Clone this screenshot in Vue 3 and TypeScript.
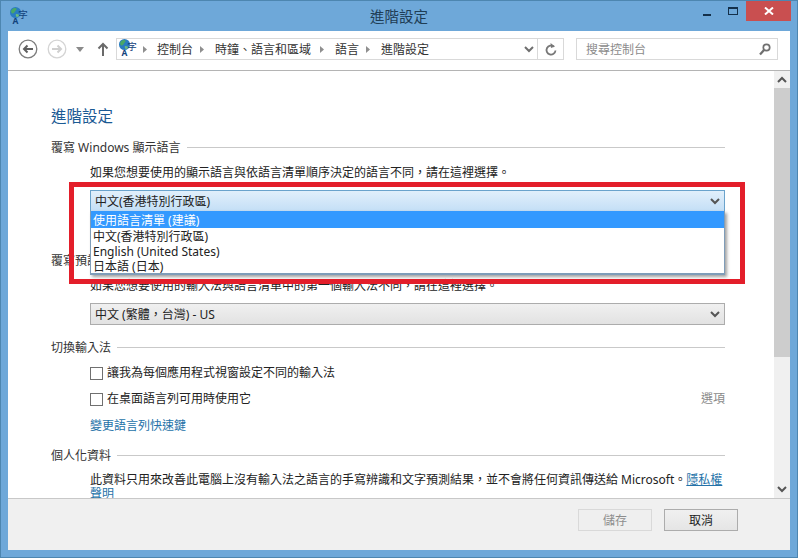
<script setup lang="ts">
const crumbs: string[] = ['控制台', '時鐘、語言和區域', '語言', '進階設定']
const options: string[] = ['使用語言清單 (建議)', '中文(香港特別行政區)', 'English (United States)', '日本語 (日本)']
</script>

<template>
  <div class="window">
    <header class="titlebar">
      <svg class="app-icon" width="20" height="20" viewBox="0 0 20 20">
        <circle cx="5.500" cy="5.500" r="5.500" fill="#2a7cc0" />
        <path d="M1.500 3C3 .5 6 .5 6.500 1.500s-1 2-1.500 3S3.500 6.500 2.500 6.500.5 4.500 1.500 3z" fill="#49a866" />
        <path d="M6 7c1 0 2.500 0 3 1s-1 2-2 2-1.500-2-1-3z" fill="#6cbb7c" />
        <text x="8.300" y="10.500" class="glyph-zi">字</text>
        <text x="2.500" y="16.500" class="glyph-a">A</text>
      </svg>
      <h1 class="title">進階設定</h1>
      <div class="controls">
        <span class="ctl"><i class="min"></i></span>
        <span class="ctl"><i class="max"></i></span>
        <span class="close">
          <svg width="10" height="8" viewBox="0 0 10 8"><path d="M1 .5l8 7M9 .5l-8 7" stroke="#fff" stroke-width="2" fill="none" /></svg>
        </span>
      </div>
    </header>

    <div class="body">
      <nav class="toolbar">
        <div class="navs">
          <svg class="nav" width="20" height="20" viewBox="0 0 20 20">
            <circle cx="10" cy="10" r="8.800" fill="#fff" stroke="#7d7d7d" stroke-width="1.300" />
            <path d="M15 10H6M9.500 6.500L6 10l3.500 3.500" stroke="#5f5f5f" stroke-width="2" fill="none" />
          </svg>
          <svg class="nav" width="20" height="20" viewBox="0 0 20 20">
            <circle cx="10" cy="10" r="8.800" fill="#fff" stroke="#d4d4d4" stroke-width="1.300" />
            <path d="M5 10h9M10.500 6.500L14 10l-3.500 3.500" stroke="#cfcfcf" stroke-width="2" fill="none" />
          </svg>
          <svg class="caret" width="8" height="5" viewBox="0 0 8 5"><path d="M0 0h8L4 5z" fill="#8a8a8a" /></svg>
          <svg class="up" width="12" height="14" viewBox="0 0 12 14">
            <path d="M6 14V2M1.500 6.500L6 2l4.500 4.500" stroke="#6a6a6a" stroke-width="2" fill="none" />
          </svg>
        </div>
        <div class="address">
          <svg class="addr-icon" width="20" height="20" viewBox="0 0 20 20">
            <circle cx="5.500" cy="5.500" r="5.500" fill="#2a7cc0" />
            <path d="M1.500 3C3 .5 6 .5 6.500 1.500s-1 2-1.500 3S3.500 6.500 2.500 6.500.5 4.500 1.500 3z" fill="#49a866" />
            <path d="M6 7c1 0 2.500 0 3 1s-1 2-2 2-1.500-2-1-3z" fill="#6cbb7c" />
            <text x="8.300" y="10.500" class="glyph-zi">字</text>
            <text x="2.500" y="16.500" class="glyph-a">A</text>
          </svg>
          <div class="crumbs">
            <template v-for="c in crumbs" :key="c">
              <svg class="sep" width="4" height="7" viewBox="0 0 4 7"><path d="M0 0l4 3.500L0 7z" fill="#8f8f8f" /></svg>
              <span class="crumb">{{ c }}</span>
            </template>
          </div>
          <svg class="addr-chev" width="10" height="7" viewBox="0 0 10 7"><path d="M1 1l4 4 4-4" stroke="#6f6f6f" stroke-width="2" fill="none" /></svg>
          <span class="refresh">
            <svg width="12" height="13" viewBox="0 0 12 13">
              <path d="M8.800 3.500A4.500 4.500 0 1 0 10.500 7.500" stroke="#777" stroke-width="1.800" fill="none" />
              <path d="M5.500 0l4.500 3.500L6 5z" fill="#777" />
            </svg>
          </span>
        </div>
        <div class="search">
          <span>搜尋控制台</span>
          <svg width="12" height="13" viewBox="0 0 12 13">
            <circle cx="7.500" cy="4.500" r="3.200" fill="none" stroke="#6f6f6f" stroke-width="1.700" />
            <path d="M5 7l-4 4.500" stroke="#6f6f6f" stroke-width="2.200" />
          </svg>
        </div>
      </nav>

      <div class="middle">
        <main class="content">
          <h2 class="page-title">進階設定</h2>

          <div class="section-head first"><span>覆寫 Windows 顯示語言</span></div>
          <p class="desc">如果您想要使用的顯示語言與依語言清單順序決定的語言不同，請在這裡選擇。</p>
          <div class="select open">
            <span>中文(香港特別行政區)</span>
            <svg width="10" height="7" viewBox="0 0 10 7"><path d="M1 1l4 4 4-4" stroke="#555" stroke-width="2" fill="none" /></svg>
            <ul class="menu">
              <li v-for="(o, i) in options" :key="o" :class="{ active: i === 0 }">{{ o }}</li>
            </ul>
          </div>

          <div class="section-head second"><span>覆寫預設輸入法</span></div>
          <p class="desc">如果您想要使用的輸入法與語言清單中的第一個輸入法不同，請在這裡選擇。</p>
          <div class="select">
            <span>中文 (繁體，台灣) - US</span>
            <svg width="10" height="7" viewBox="0 0 10 7"><path d="M1 1l4 4 4-4" stroke="#555" stroke-width="2" fill="none" /></svg>
          </div>

          <div class="section-head third"><span>切換輸入法</span></div>
          <label class="check first-check"><i class="box"></i>讓我為每個應用程式視窗設定不同的輸入法</label>
          <div class="check-row">
            <label class="check"><i class="box"></i>在桌面語言列可用時使用它</label>
            <span class="options">選項</span>
          </div>
          <a class="link hotkey">變更語言列快速鍵</a>

          <div class="section-head fourth"><span>個人化資料</span></div>
          <p class="para">此資料只用來改善此電腦上沒有輸入法之語言的手寫辨識和文字預測結果，並不會將任何資訊傳送給 Microsoft。<a class="link under">隱私權<br />聲明</a></p>
        </main>
        <aside class="scrollbar">
          <span class="arrow"><svg width="10" height="7" viewBox="0 0 10 7"><path d="M1 6l4-4 4 4" stroke="#555" stroke-width="2" fill="none" /></svg></span>
          <div class="track"><div class="thumb"></div></div>
          <span class="arrow"><svg width="10" height="7" viewBox="0 0 10 7"><path d="M1 1l4 4 4-4" stroke="#555" stroke-width="2" fill="none" /></svg></span>
        </aside>
      </div>

      <footer class="footer">
        <button class="btn" disabled>儲存</button>
        <button class="btn">取消</button>
      </footer>
    </div>

    <div class="annotation"></div>
  </div>
</template>

<style scoped>
.window {
  position: relative;
  box-sizing: border-box;
  width: 798px;
  height: 558px;
  display: flex;
  flex-direction: column;
  padding: 0 7px 7px;
  background: #6ea8d9;
  border: 1px solid #4d86b0;
  font-family: "Noto Sans", "Noto Sans CJK TC", sans-serif;
  font-size: 12px;
  color: #222;
  overflow: hidden;
}
.titlebar {
  position: relative;
  flex: 0 0 30px;
  box-sizing: border-box;
  padding-bottom: 2px;
  display: flex;
  align-items: center;
  justify-content: center;
}
.app-icon {
  position: absolute;
  left: 2px;
  top: 6px;
}
.glyph-zi {
  font-size: 9.500px;
  fill: #12437c;
  font-family: "Noto Sans CJK TC", sans-serif;
}
.glyph-a {
  font-size: 8.500px;
  font-weight: 700;
  fill: #12437c;
  font-family: "Noto Sans", sans-serif;
}
.title {
  margin: 0;
  font-size: 14.500px;
  font-weight: 400;
  color: #1f3d55;
}
.controls {
  position: absolute;
  right: -1px;
  top: 0;
  display: flex;
  align-items: flex-start;
}
.ctl {
  width: 22px;
  height: 20px;
  display: flex;
  align-items: center;
  justify-content: center;
}
.ctl:first-child {
  margin-right: 4px;
}
.min {
  display: block;
  width: 8px;
  height: 2px;
  margin-top: 7px;
  background: #14304a;
}
.max {
  display: block;
  box-sizing: border-box;
  width: 10px;
  height: 8px;
  margin-top: -1px;
  border: 1px solid #14304a;
  border-top-width: 2px;
}
.close {
  width: 45px;
  height: 20px;
  margin-left: 2px;
  background: #c94f50;
  display: flex;
  align-items: center;
  justify-content: center;
}
.body {
  flex: 1;
  min-height: 0;
  display: flex;
  flex-direction: column;
  background: #fff;
}
.toolbar {
  flex: 0 0 40px;
  box-sizing: border-box;
  display: flex;
  align-items: flex-start;
  padding-top: 7px;
  border-bottom: 1px solid #b4b4b4;
}
.navs {
  width: 108px;
  height: 22px;
  flex: none;
  display: flex;
  align-items: center;
}
.nav {
  margin-left: 10px;
}
.nav + .nav {
  margin-left: 9px;
}
.caret {
  margin-left: 9px;
}
.up {
  margin-left: 13px;
}
.address {
  box-sizing: border-box;
  width: 448px;
  height: 22px;
  flex: none;
  display: flex;
  align-items: center;
  border: 1px solid #d9d9d9;
}
.addr-icon {
  margin-left: 2px;
  flex: none;
}
.crumbs {
  flex: 1;
  display: flex;
  align-items: center;
}
.sep {
  margin-left: 7px;
  margin-right: 11px;
  flex: none;
}
.sep:first-child {
  margin-left: 4px;
  margin-right: 10px;
}
.sep:nth-child(5) {
  margin-left: 9px;
}
.crumb {
  color: #333;
}
.addr-chev {
  margin-right: 3px;
  flex: none;
}
.refresh {
  width: 25px;
  height: 20px;
  border-left: 1px solid #d9d9d9;
  display: flex;
  align-items: center;
  justify-content: center;
  flex: none;
}
.search {
  box-sizing: border-box;
  width: 202px;
  height: 22px;
  margin-left: 12px;
  flex: none;
  display: flex;
  align-items: center;
  justify-content: space-between;
  padding: 0 6px 0 9px;
  border: 1px solid #d9d9d9;
  color: #8c8c8c;
}
.middle {
  flex: 1;
  min-height: 0;
  display: flex;
}
.content {
  flex: 1;
  min-width: 0;
  overflow: hidden;
  padding: 35px 49px 0 43px;
}
.page-title {
  margin: 0;
  height: 20px;
  line-height: 20px;
  font-size: 15.500px;
  font-weight: 400;
  color: #1b5a94;
}
.section-head {
  display: flex;
  align-items: center;
  gap: 6px;
  height: 16px;
  line-height: 16px;
  color: #333;
}
.section-head span {
  padding-top: 2px;
}
.section-head::after {
  content: "";
  flex: 1;
  height: 1px;
  background: #c9c9c9;
}
.section-head.first {
  margin-top: 13px;
}
.section-head.second {
  margin-top: 40px;
}
.section-head.third {
  margin-top: 14px;
}
.section-head.fourth {
  margin-top: 13px;
}
.desc {
  margin: 10px 0 9px 39px;
  height: 16px;
  line-height: 16px;
  white-space: nowrap;
}
.select {
  position: relative;
  box-sizing: border-box;
  margin-left: 39px;
  height: 22px;
  display: flex;
  align-items: center;
  justify-content: space-between;
  padding: 0 4px 0 4px;
  border: 1px solid #acacac;
  background: linear-gradient(#f0f0f0, #e2e2e2);
}
.select.open {
  border-color: #6aa3cc;
  background: linear-gradient(#e1effb, #c4dff6);
}
.menu {
  position: absolute;
  z-index: 2;
  left: -1px;
  right: -1px;
  top: 20px;
  margin: 0;
  padding: 0;
  list-style: none;
  background: #fff;
  border: 1px solid #7f9db9;
  border-top: 0;
  border-bottom-width: 2px;
  box-shadow: 2px 2px 3px rgba(70, 70, 70, 0.5);
}
.menu li {
  box-sizing: border-box;
  height: 15px;
  line-height: 15px;
  padding: 1px 0 0 2px;
  color: #222;
}
.menu li.active {
  height: 17px;
  padding-top: 2px;
  background: #3399ff;
  color: #fff;
}
.check {
  display: flex;
  align-items: center;
  gap: 4px;
  height: 16px;
  line-height: 16px;
}
.first-check {
  margin: 10px 0 1px 39px;
}
.box {
  display: block;
  box-sizing: border-box;
  width: 13px;
  height: 13px;
  border: 1px solid #707070;
  background: #fff;
}
.check-row {
  height: 16px;
  line-height: 16px;
  margin: 10px 0 0 39px;
  display: flex;
  align-items: center;
  justify-content: space-between;
}
.options {
  color: #8a8a8a;
}
.link {
  color: #2572a8;
}
.hotkey {
  display: block;
  margin: 11px 0 0 39px;
  height: 16px;
  line-height: 16px;
}
.under {
  text-decoration: underline;
}
.para {
  margin: 10px 0 0 39px;
  line-height: 14px;
  white-space: nowrap;
}
.scrollbar {
  flex: 0 0 16px;
  display: flex;
  flex-direction: column;
  background: #f0f0f0;
}
.arrow {
  flex: 0 0 17px;
  display: flex;
  align-items: center;
  justify-content: center;
}
.track {
  flex: 1;
}
.thumb {
  height: 269px;
  background: #cdcdcd;
}
.footer {
  flex: 0 0 52px;
  box-sizing: border-box;
  display: flex;
  justify-content: flex-end;
  gap: 12px;
  padding: 10px 52px 0 0;
  background: #f0f0f0;
  border-top: 1px solid #c8c8c8;
}
.btn {
  box-sizing: border-box;
  width: 74px;
  height: 22px;
  padding: 0;
  font: inherit;
  color: #222;
  border: 1px solid #acacac;
  background: linear-gradient(#f0f0f0, #e5e5e5);
}
.btn:disabled {
  color: #8d8d8d;
  border-color: #d9d9d9;
  background: #efefef;
}
.annotation {
  position: absolute;
  z-index: 3;
  left: 68px;
  top: 181px;
  box-sizing: border-box;
  width: 676px;
  height: 102px;
  border: 5px solid #e31e2a;
  pointer-events: none;
}
</style>
